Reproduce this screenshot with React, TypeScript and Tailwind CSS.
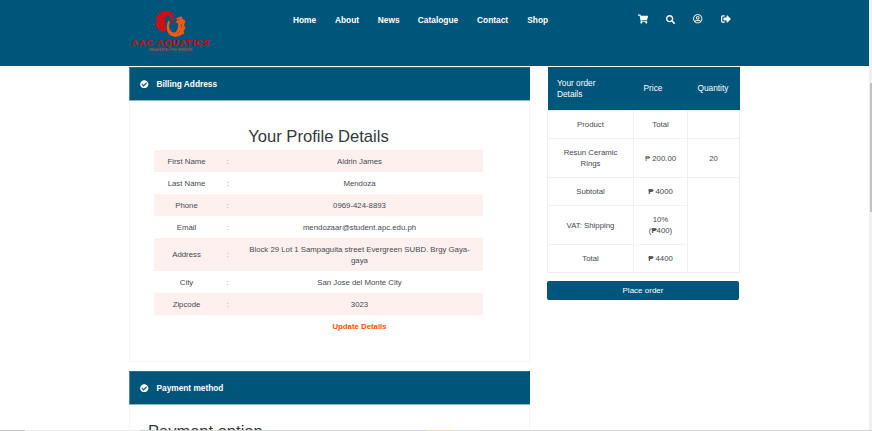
import React from "react";
import { FaCheckCircle, FaRegUserCircle, FaSearch, FaShoppingCart, FaSignOutAlt } from "react-icons/fa";

const links = [
  { label: "Home", width: "w-[42px]" },
  { label: "About", width: "w-[42.8px]" },
  { label: "News", width: "w-[40px]" },
  { label: "Catalogue", width: "w-[59.3px]" },
  { label: "Contact", width: "w-[50.2px]" },
  { label: "Shop", width: "w-[30px]" },
];

const details = [
  ["First Name", "Aldrin James"],
  ["Last Name", "Mendoza"],
  ["Phone", "0969-424-8893"],
  ["Email", "mendozaar@student.apc.edu.ph"],
  ["Address", "Block 29 Lot 1 Sampaguita street Evergreen SUBD. Brgy Gaya-gaya"],
  ["City", "San Jose del Monte City"],
  ["Zipcode", "3023"],
];

function Logo() {
  return (
    <svg width="82" height="46" viewBox="0 0 82 46" aria-label="AAC Aquatics">
      <path d="M35.500 21C29 21.500 25 18.500 24.500 14L26 11.500L24.500 8L27 5C29 2 32 .5 35.500 1C40 1 42.500 4 42.500 8L42 13L40.500 13C41 9 39.500 5.500 37 5.500C34.500 6 33.500 8 34 11.500C34 15 34.500 18 35.500 21Z" fill="#d90b10" />
      <path d="M37.500 10.500C34 16 35.500 25 42 26.500C45 27.500 48 26.500 50 25L53.500 23.500L52.500 21L54.500 18L53 15L54.500 11L51.500 9L51 6.500L48 7L45 8.500L46.500 10L44.500 12L47 13.500C47.500 18 46 22 43.500 22.500C39 22.500 37 17 39 12Z" fill="#f05a13" />
      <path d="M28 5L31 4M27 9L29 12M28 15L31 17M47 10L49 9M50 14L51 18M46 24L49 21" stroke="#075376" strokeWidth=".5" fill="none" />
      <text x="0.500" y="35.900" textLength="78" lengthAdjust="spacing" fill="#c60c18" stroke="#c60c18" strokeWidth=".25" fontFamily="Liberation Sans, sans-serif" fontWeight="700" fontSize="9">AAC AQUATICS</text>
      <text x="17.500" y="41" textLength="43.500" lengthAdjust="spacing" fill="#a55746" fontFamily="Liberation Sans, sans-serif" fontWeight="700" fontSize="2.600">ORNAMENTAL FISH BREEDER</text>
    </svg>
  );
}

function CardTitle({ children }: { children: React.ReactNode }) {
  return (
    <div className="flex h-[34px] items-center border-t border-l border-b border-t-[#236c8b] border-l-[#4d89a1] border-b-[#91b5c3] bg-[#00567a] pl-[10px] text-[8.3px] font-bold text-white">
      <FaCheckCircle className="mr-[8px] size-[8.5px]" />
      {children}
    </div>
  );
}

function OrderSummary() {
  const cell = "border border-[#eeeff0] px-[10px] text-center";
  return (
    <section className="w-[192px] pt-px">
      <table className="w-[192px] table-fixed border-collapse text-[7.8px] leading-[11px]">
        <colgroup>
          <col className="w-[86px]" />
          <col className="w-[54px]" />
          <col className="w-[52px]" />
        </colgroup>
        <thead className="bg-[#00567a] text-[8.3px] leading-[11.5px] text-white">
          <tr className="h-[43.500px]">
            <th className="pt-px pl-[9.5px] text-left font-normal">Your order<br />Details</th>
            <th className="pt-px pl-[10px] text-left font-normal">Price</th>
            <th className="pt-px pl-[10px] text-left font-normal">Quantity</th>
          </tr>
        </thead>
        <tbody>
          <tr className="h-[28px]"><td className={cell}>Product</td><td className={cell}>Total</td><td className={cell} /></tr>
          <tr className="h-[39px]"><td className={cell}>Resun Ceramic Rings</td><td className="border border-[#eeeff0] text-center whitespace-nowrap">₱ 200.00</td><td className={cell}>20</td></tr>
          <tr className="h-[28px]"><td className={cell}>Subtotal</td><td className={cell}><b>₱</b> 4000</td><td rowSpan={3} className={cell} /></tr>
          <tr className="h-[39px]"><td className={cell}>VAT: Shipping</td><td className={cell}>10%<br />(<b>₱</b>400)</td></tr>
          <tr className="h-[28px]"><td className={cell}>Total</td><td className={cell}><b>₱</b> 4400</td></tr>
        </tbody>
      </table>
      <button className="mt-[8px] h-[19px] w-full rounded-[2px] bg-[#00567a] pt-px text-[8px] text-white">Place order</button>
    </section>
  );
}

export default function App() {
  return (
    <div className="flex h-[431px] w-[872px] flex-col overflow-hidden bg-white font-['Liberation_Sans',Arial,sans-serif] text-[#454a4e]">
      <div className="flex h-[430px] shrink-0">
        <div className="flex w-[869px] flex-col overflow-hidden">
          <header className="flex h-[66px] shrink-0 items-start bg-[#00567a] text-white">
            <div className="w-[293px] pt-[10px] pl-[131px]"><Logo /></div>
            <nav className="flex w-[345px] pt-[14px] text-[8.35px] leading-[12px] font-bold">
              {links.map((link) => <a key={link.label} className={link.width}>{link.label}</a>)}
            </nav>
            <div className="flex items-center gap-[18.200px] pt-[14px]">
              <FaShoppingCart className="size-[10px]" />
              <FaSearch className="size-[9px]" />
              <FaRegUserCircle className="size-[9.500px]" />
              <FaSignOutAlt className="size-[10px]" />
            </div>
          </header>
          <main className="flex gap-[17px] pl-[129px]">
            <div className="w-[401px] shrink-0 pt-px">
              <section className="h-[295px] border-x border-b border-[#f6f6f6]">
                <div className="-mx-px"><CardTitle>Billing Address</CardTitle></div>
                <div className="pt-[26px] pl-[24px]">
                  <h2 className="h-[23px] w-[329px] text-center text-[16.6px] leading-[20px] text-[#33383d]">Your Profile Details</h2>
                  <table className="w-[329px] table-fixed border-collapse text-center text-[7.8px] leading-[11px]">
                    <colgroup><col className="w-[65px]" /><col className="w-[17px]" /><col className="w-[247px]" /></colgroup>
                    <tbody>
                      {details.map(([label, value]) => (
                        <tr key={label} className="odd:bg-[#fff0f0]">
                          <td className="py-[5.5px]">{label}</td><td className="text-[#85898c]">:</td><td className="px-[8px] py-[5.5px]">{value}</td>
                        </tr>
                      ))}
                      <tr><td /><td /><td className="py-[5.5px] font-bold text-[#ff5200]">Update Details</td></tr>
                    </tbody>
                  </table>
                </div>
              </section>
              <section className="mt-[9px] h-[80px] border-x border-[#f6f6f6]">
                <div className="-mx-px"><CardTitle>Payment method</CardTitle></div>
                <h2 className="pt-[16px] pl-[18px] text-[16.5px] leading-[20px] text-[#33383d]">Payment option</h2>
              </section>
            </div>
            <OrderSummary />
          </main>
        </div>
        <div className="w-[3px] bg-[#f1f1f1] pt-[83px] pl-px"><div className="h-[129px] bg-[#c1c1c1]" /></div>
      </div>
      <div className="flex h-px shrink-0 bg-[#d4d4d4]">
        <div className="w-[25px] bg-[#c8c8c8]" /><div className="w-[115px] bg-[#ededed]" /><div className="w-[287px]" /><div className="w-[26px] bg-[#f5d9bf]" /><div className="w-[27px] bg-[#dedede]" />
      </div>
    </div>
  );
}
